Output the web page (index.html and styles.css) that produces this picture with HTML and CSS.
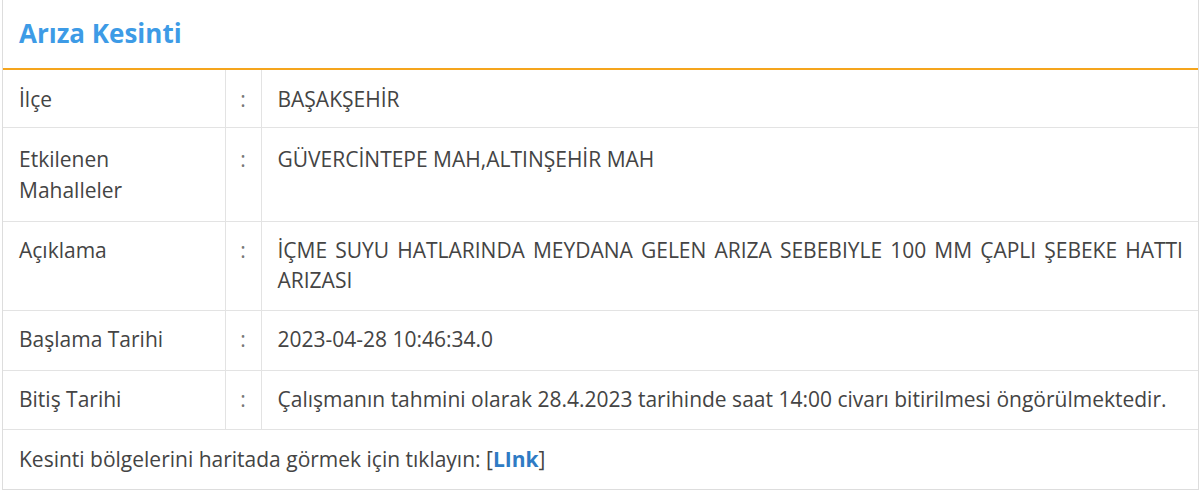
FILE: index.html
```html
<!DOCTYPE html>
<html lang="tr">
<head>
<meta charset="utf-8">
<title>Arıza Kesinti</title>
<link rel="stylesheet" href="styles.css">
</head>
<body>
<div class="panel">
  <div class="panel-head"><h2 class="title">Arıza Kesinti</h2></div>
  <table class="info">
    <colgroup><col class="c-label"><col class="c-sep"><col class="c-val"></colgroup>
    <tr class="r1"><td>İlçe</td><td class="sep">:</td><td>BAŞAKŞEHİR</td></tr>
    <tr class="r2"><td>Etkilenen Mahalleler</td><td class="sep">:</td><td>GÜVERCİNTEPE MAH,ALTINŞEHİR MAH</td></tr>
    <tr class="r3"><td>Açıklama</td><td class="sep">:</td><td class="val">İÇME SUYU HATLARINDA MEYDANA GELEN ARIZA SEBEBIYLE 100 MM ÇAPLI ŞEBEKE HATTI ARIZASI</td></tr>
    <tr class="r4"><td>Başlama Tarihi</td><td class="sep">:</td><td>2023-04-28 10:46:34.0</td></tr>
    <tr class="r5"><td>Bitiş Tarihi</td><td class="sep">:</td><td>Çalışmanın tahmini olarak 28.4.2023 tarihinde saat 14:00 civarı bitirilmesi öngörülmektedir.</td></tr>
    <tr class="r6"><td colspan="3">Kesinti bölgelerini haritada görmek için tıklayın: [<a class="lnk" href="#">LInk</a>]</td></tr>
  </table>
</div>
</body>
</html>
```

FILE: styles.css
```css
html, body { margin: 0; padding: 0; background: #fff; }
body { font-family: "Open Sans", "Noto Sans", sans-serif; color: #444; }
.panel {
  width: 1197px;
  margin-left: 2px;
  border-left: 1px solid #ddd;
  border-right: 1px solid #ddd;
  border-bottom: 1px solid #ddd;
  box-sizing: border-box;
}
.panel-head {
  height: 70px;
  border-bottom: 2px solid #f5a51d;
  display: flex;
  align-items: center;
  padding-left: 16px;
  padding-bottom: 2px;
  box-sizing: border-box;
}
.title {
  margin: 0;
  font-size: 26px;
  font-weight: 700;
  color: #3d9be6;
  line-height: 32px;
}
.info {
  width: 100%;
  border-collapse: collapse;
  font-size: 21px;
  line-height: 30px;
  table-layout: fixed;
}
.info td {
  border: 1px solid #e3e3e3;
  vertical-align: top;
  padding: 13px 15px 15px 16px;
}
.info tr:first-child td { border-top: none; }
.info td:first-child { border-left: none; }
.info td:last-child { border-right: none; }
.info tr:last-child td { border-bottom: none; }
.c-label { width: 222px; }
.c-sep { width: 36px; }
.info td.sep { padding-left: 0; padding-right: 0; text-align: center; color: #777; }
.info td.val { text-align: justify; }
.info .r1 td { padding-top: 14px; padding-bottom: 13px; }
.info .r2 td { padding-top: 16px; padding-bottom: 15px; line-height: 31px; }
.info .r4 td { padding-bottom: 16px; }
.info .r6 td { padding-top: 14px; }
.lnk { color: #2f7bc4; font-weight: 700; text-decoration: none; }
```
